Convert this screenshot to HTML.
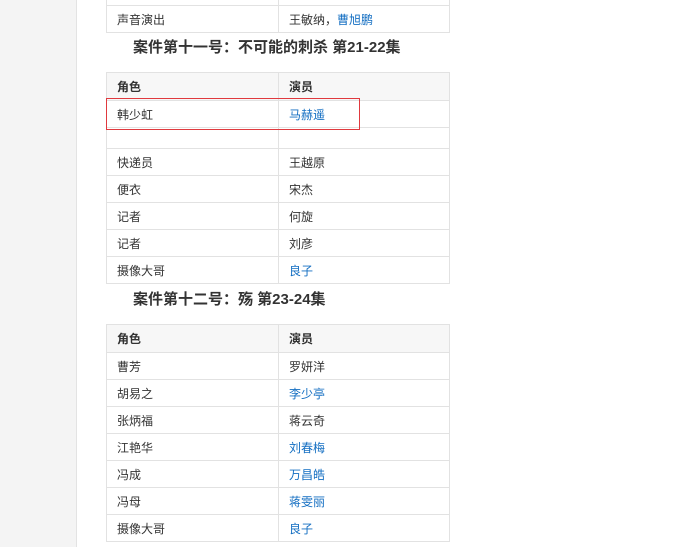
<!DOCTYPE html>
<html><head><meta charset="utf-8"><style>
body{margin:0;width:679px;height:547px;overflow:hidden;background:#fff;font-family:"Liberation Sans","Noto Sans CJK SC",sans-serif;font-size:12px;color:#333;position:relative}
.side{position:absolute;left:0;top:0;width:76px;height:547px;background:#f4f4f4;border-right:1px solid #e3e3e3}
table{position:absolute;left:106px;width:344px;border-collapse:collapse}
td,th{border:1px solid #e2e2e2;height:26px;padding:0 0 0 10px;text-align:left;vertical-align:middle;font-size:12px}
td:first-child,th:first-child{width:161px}
th{background:#f7f7f7;font-weight:bold;height:27px}
a{color:#136ec2;text-decoration:none}
h3{position:absolute;left:133px;margin:0;font-size:15px;font-weight:bold;color:#333}
.red{position:absolute;left:106px;top:98px;width:252px;height:30px;border:1px solid #e0393e}
.e td{height:20px;font-size:0;line-height:0;padding:0}
</style></head><body>
<div class="side"></div>
<table style="top:-22px"><tr><td>&nbsp;</td><td></td></tr><tr><td>声音演出</td><td>王敏纳，<a>曹旭鹏</a></td></tr></table>
<h3 style="top:36px">案件第十一号：不可能的刺杀 第21-22集</h3>
<table style="top:72px">
<tr><th>角色</th><th>演员</th></tr>
<tr><td>韩少虹</td><td><a>马赫遥</a></td></tr>
<tr class="e"><td></td><td></td></tr>
<tr><td>快递员</td><td>王越原</td></tr>
<tr><td>便衣</td><td>宋杰</td></tr>
<tr><td>记者</td><td>何旋</td></tr>
<tr><td>记者</td><td>刘彦</td></tr>
<tr><td>摄像大哥</td><td><a>良子</a></td></tr>
</table>
<div class="red"></div>
<h3 style="top:288px">案件第十二号：殇 第23-24集</h3>
<table style="top:324px">
<tr><th>角色</th><th>演员</th></tr>
<tr><td>曹芳</td><td>罗妍洋</td></tr>
<tr><td>胡易之</td><td><a>李少亭</a></td></tr>
<tr><td>张炳福</td><td>蒋云奇</td></tr>
<tr><td>江艳华</td><td><a>刘春梅</a></td></tr>
<tr><td>冯成</td><td><a>万昌皓</a></td></tr>
<tr><td>冯母</td><td><a>蒋雯丽</a></td></tr>
<tr><td>摄像大哥</td><td><a>良子</a></td></tr>
</table>
</body></html>
